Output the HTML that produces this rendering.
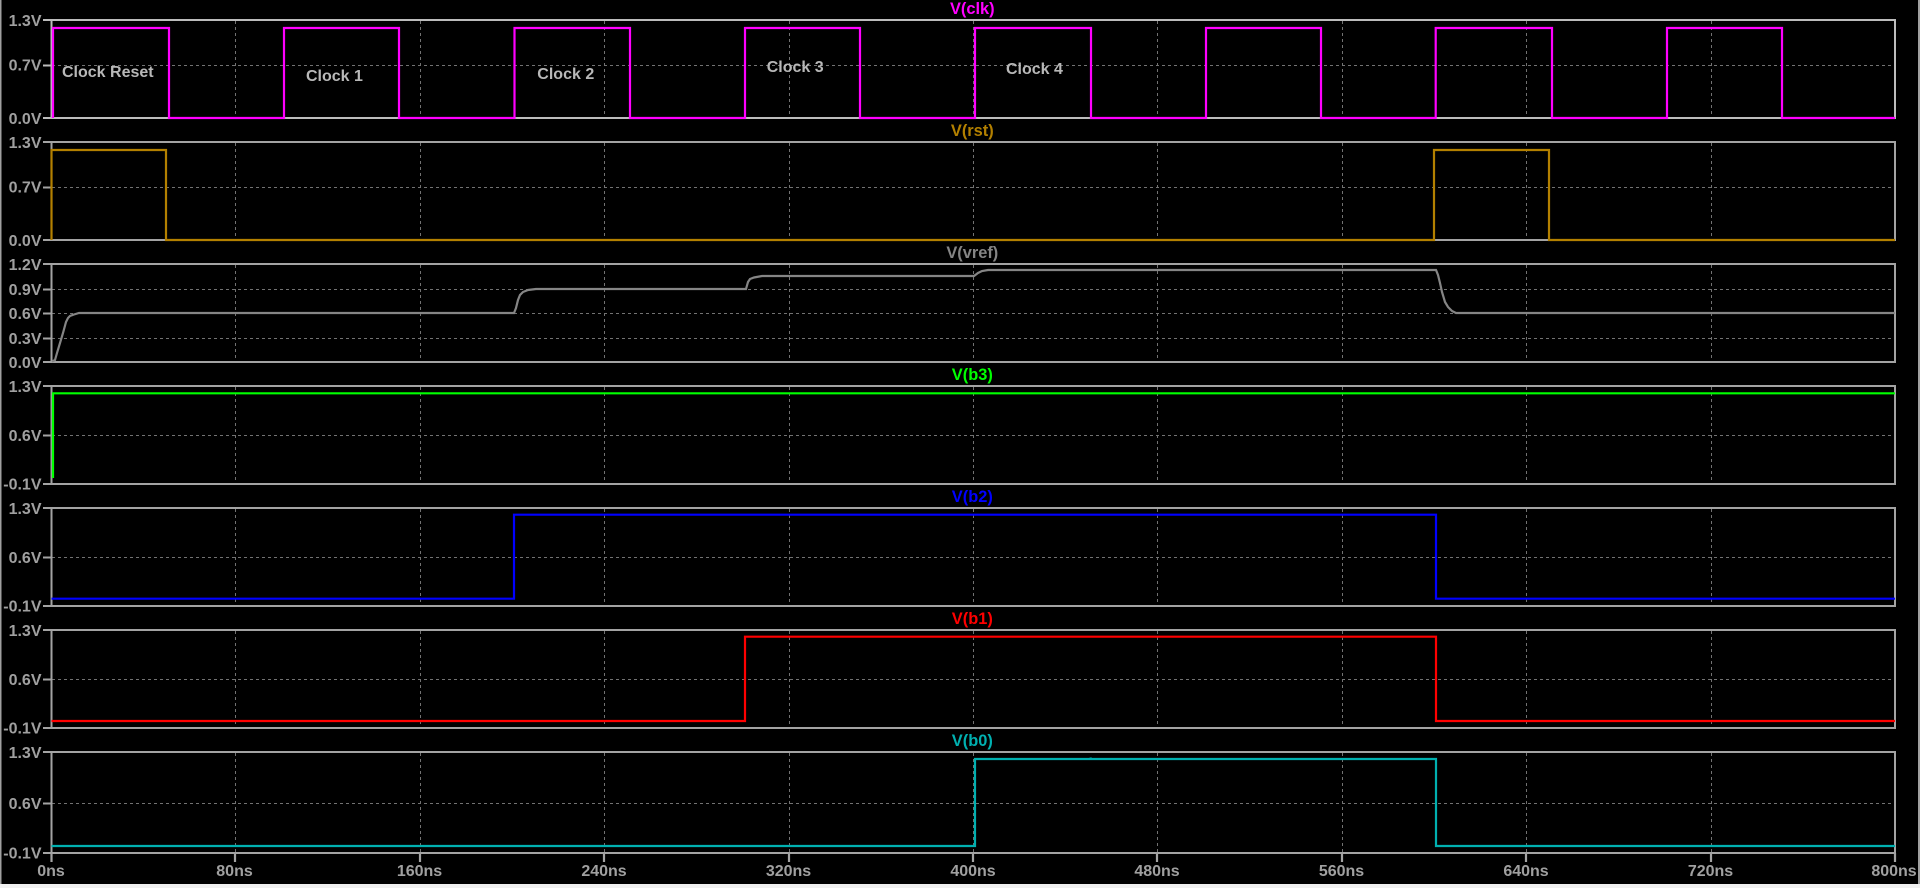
<!DOCTYPE html>
<html><head><meta charset="utf-8"><title>V(clk) waveforms</title>
<style>
html,body{margin:0;padding:0;background:#000;width:1920px;height:888px;overflow:hidden}
svg{display:block;filter:blur(.3px)}
text{font-family:"Liberation Sans",sans-serif;font-weight:bold;font-size:16px}
.y text{fill:#a0a0a0;text-anchor:end}
.x text{fill:#a0a0a0;text-anchor:middle}
.t text{text-anchor:middle;font-size:16.4px}
.c text{fill:#b8b8b8}
.f{fill:none;stroke:#a3a3a3;stroke-width:2}
.g{fill:none;stroke:#727272;stroke-width:1;stroke-dasharray:3 3}
.w{fill:none;stroke-width:2.2;stroke-linejoin:miter}
</style></head><body>
<svg width="1920" height="888" viewBox="0 0 1920 888" xmlns="http://www.w3.org/2000/svg">
<rect width="1920" height="888" fill="#000"/>
<rect x="0" y="0" width="1.5" height="884" fill="#a0a0a0"/>
<rect x="1918" y="0" width="2" height="884" fill="#a0a0a0"/>
<rect x="0" y="884" width="1920" height="4" fill="#f0f0f0"/>

<!-- grid -->
<path class="g" d="M52 65.5H1894M52 187.5H1894M52 289.5H1894M52 313.5H1894M52 338.5H1894M52 435.5H1894M52 557.5H1894M52 679.5H1894M52 803.5H1894"/>
<path class="g" d="M235.5 21V117M420.5 21V117M604.5 21V117M789.5 21V117M973.5 21V117M1157.5 21V117M1342.5 21V117M1526.5 21V117M1711.5 21V117
M235.5 143V239M420.5 143V239M604.5 143V239M789.5 143V239M973.5 143V239M1157.5 143V239M1342.5 143V239M1526.5 143V239M1711.5 143V239
M235.5 265V361M420.5 265V361M604.5 265V361M789.5 265V361M973.5 265V361M1157.5 265V361M1342.5 265V361M1526.5 265V361M1711.5 265V361
M235.5 387V483M420.5 387V483M604.5 387V483M789.5 387V483M973.5 387V483M1157.5 387V483M1342.5 387V483M1526.5 387V483M1711.5 387V483
M235.5 509V605M420.5 509V605M604.5 509V605M789.5 509V605M973.5 509V605M1157.5 509V605M1342.5 509V605M1526.5 509V605M1711.5 509V605
M235.5 631V727M420.5 631V727M604.5 631V727M789.5 631V727M973.5 631V727M1157.5 631V727M1342.5 631V727M1526.5 631V727M1711.5 631V727
M235.5 753V852M420.5 753V852M604.5 753V852M789.5 753V852M973.5 753V852M1157.5 753V852M1342.5 753V852M1526.5 753V852M1711.5 753V852"/>

<!-- frames and ticks -->
<path class="f" style="stroke:#bcbcbc" d="M51.5 20H1895V118H51.5ZM43 20H51M43 65.5H51M43 118H51"/>
<path class="f" d="M51.5 142H1895V240H51.5ZM43 142H51M43 187.5H51M43 240H51"/>
<path class="f" d="M51.5 264H1895V362H51.5ZM43 264H51M43 289.5H51M43 313.5H51M43 338.5H51M43 362H51"/>
<path class="f" d="M51.5 386H1895V484H51.5ZM43 386H51M43 435.5H51M43 484H51"/>
<path class="f" d="M51.5 508H1895V606H51.5ZM43 508H51M43 557.5H51M43 606H51"/>
<path class="f" d="M51.5 630H1895V728H51.5ZM43 630H51M43 679.5H51M43 728H51"/>
<path class="f" d="M51.5 752H1895V853H51.5ZM43 752H51M43 803.5H51M43 853H51"/>
<path class="f" style="stroke-width:2.2" d="M51.5 853V862M235 853V862M420 853V862M604 853V862M789 853V862M973 853V862M1157 853V862M1342 853V862M1526 853V862M1711 853V862M1895 853V862"/>

<!-- traces -->
<path class="w" stroke="#ff00ff" d="M53 118V28H169V118H284V28H399V118H514.5V28H630V118H745V28H860V118H975V28H1091V118H1206V28H1321V118H1435.7V28H1552V118H1667V28H1782V118H1895"/>
<path class="w" stroke="#b38000" d="M51.5 240V150H166V240H1434V150H1549V240H1895"/>
<path class="w" stroke="#858585" d="M52 361.5L55 360L57 353L60 343L63 333L66 322L68 318L70 316L74 314.5L79 313H514L516 308L518 300L520 295L523 292L528 290L536 289H746L748 282L750 279L754 277.5L762 276H974L978 273L982 271L988 270H1436L1438 275L1440 283L1442 292L1445 302L1448 307L1452 311L1456 313H1895"/>
<path class="w" stroke="#00ff00" style="stroke-width:2.2" d="M53 478V393.3H1895"/>
<path class="w" stroke="#0000ff" d="M51.5 598.7H514V514.7H1436V598.7H1895"/>
<path class="w" stroke="#ff0000" d="M51.5 721H745V636.7H1436V721H1895"/>
<path class="w" stroke="#00b0b0" d="M51.5 846H975V759H1436V846H1895M1090.7 759V757.5"/>

<!-- y labels -->
<g class="y">
<text x="41.5" y="26">1.3V</text><text x="41.5" y="70.5">0.7V</text><text x="41.5" y="124">0.0V</text>
<text x="41.5" y="148">1.3V</text><text x="41.5" y="192.5">0.7V</text><text x="41.5" y="246">0.0V</text>
<text x="41.5" y="270">1.2V</text><text x="41.5" y="295">0.9V</text><text x="41.5" y="319">0.6V</text><text x="41.5" y="344">0.3V</text><text x="41.5" y="368">0.0V</text>
<text x="41.5" y="392">1.3V</text><text x="41.5" y="441">0.6V</text><text x="41.5" y="489.5">-0.1V</text>
<text x="41.5" y="514">1.3V</text><text x="41.5" y="563">0.6V</text><text x="41.5" y="611.5">-0.1V</text>
<text x="41.5" y="636">1.3V</text><text x="41.5" y="685">0.6V</text><text x="41.5" y="733.5">-0.1V</text>
<text x="41.5" y="758">1.3V</text><text x="41.5" y="809">0.6V</text><text x="41.5" y="858.5">-0.1V</text>
</g>

<!-- x labels -->
<g class="x">
<text x="51" y="876">0ns</text><text x="234.5" y="876">80ns</text><text x="419.5" y="876">160ns</text><text x="604" y="876">240ns</text><text x="788.5" y="876">320ns</text><text x="973" y="876">400ns</text><text x="1157" y="876">480ns</text><text x="1341.5" y="876">560ns</text><text x="1526" y="876">640ns</text><text x="1710.5" y="876">720ns</text><text x="1894" y="876">800ns</text>
</g>

<!-- titles -->
<g class="t">
<text x="972.3" y="14" fill="#ff00ff">V(clk)</text>
<text x="972.3" y="136" fill="#b38000">V(rst)</text>
<text x="972.3" y="258" fill="#858585">V(vref)</text>
<text x="972.3" y="380" fill="#00ff00">V(b3)</text>
<text x="972.3" y="502" fill="#0000ff">V(b2)</text>
<text x="972.3" y="624" fill="#ff0000">V(b1)</text>
<text x="972.3" y="746" fill="#00b0b0">V(b0)</text>
</g>

<!-- annotations -->
<g class="c">
<text x="62" y="77">Clock Reset</text>
<text x="306" y="81">Clock 1</text>
<text x="537.3" y="79">Clock 2</text>
<text x="766.7" y="72">Clock 3</text>
<text x="1006" y="74">Clock 4</text>
</g>
</svg>
</body></html>
